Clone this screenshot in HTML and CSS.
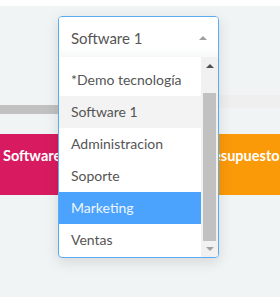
FILE: index.html
```html
<!DOCTYPE html>
<html lang="en">
<head>
  <meta charset="UTF-8" />
  <title>Selector de departamento</title>
  <link rel="stylesheet" href="styles.css">
</head>
<body>
  <div class="topbar"></div>

  <main class="page">
    <!-- progress bar behind the dropdown -->
    <div class="progress">
      <div class="progress-fill"></div>
      <div class="progress-rest"></div>
    </div>

    <!-- summary cards (middle one is covered by the dropdown) -->
    <div class="cards">
      <div class="card card-pink">Software</div>
      <div class="card card-blue"></div>
      <div class="card card-orange">Presupuesto</div>
    </div>
  </main>

  <!-- open select -->
  <div class="select">
    <div class="select-head">
      <span>Software 1</span>
      <span class="caret"></span>
    </div>
    <div class="select-body">
      <ul class="options">
        <li class="option option-cut"></li>
        <li class="option">*Demo tecnología</li>
        <li class="option selected">Software 1</li>
        <li class="option">Administracion</li>
        <li class="option">Soporte</li>
        <li class="option hover">Marketing</li>
        <li class="option">Ventas</li>
      </ul>
      <div class="scrollbar">
        <span class="arrow arrow-up"></span>
        <div class="track"><div class="thumb"></div></div>
        <span class="arrow arrow-down"></span>
      </div>
    </div>
  </div>
</body>
</html>
```

FILE: styles.css
```css
* {
  box-sizing: border-box;
}

body {
  margin: 0;
  background: #f1f4f5;
  font-family: Lato, "Open Sans", sans-serif;
  height: 297px;
  overflow: hidden;
  position: relative;
}

/* white strip at the top */
.topbar {
  height: 6px;
  background: #fff;
}

.page {
  padding-top: 99px;
}

/* progress bar */
.progress {
  display: flex;
  height: 9px;
}

.progress-fill {
  width: 180px;
  background: #c1c1c1;
}

.progress-rest {
  flex: 1;
  background: #efefef;
  margin-top: -10px;
  height: 13px;
}

/* cards row */
.cards {
  display: flex;
  gap: 8px;
  margin-top: 20px;
  height: 61px;
}

.card {
  color: #fff;
  font-weight: bold;
  font-size: 14.5px;
  padding: 13px 3px 0;
  white-space: nowrap;
  overflow: hidden;
}

.card-pink {
  width: 96px;
  background: #d81b60;
}

.card-blue {
  width: 84px;
  background: #2196f3;
}

.card-orange {
  flex: 1;
  background: #fb9a09;
}

/* the open dropdown */
.select {
  position: absolute;
  left: 58px;
  top: 16px;
  width: 161px;
  border: 1px solid #5aabf0;
  border-radius: 4px;
  background: #fff;
  box-shadow: 0 4px 14px rgba(0, 0, 0, 0.12);
  overflow: hidden;
}

.select-head {
  height: 40px;
  display: flex;
  align-items: center;
  justify-content: space-between;
  padding: 2px 11px 0 12px;
  font-size: 15px;
  color: #555;
  background: linear-gradient(#fff 75%, #f7f8f9);
}

.caret {
  width: 0;
  height: 0;
  border-left: 4px solid transparent;
  border-right: 4px solid transparent;
  border-bottom: 4px solid #a0a0a0;
}

.select-body {
  display: flex;
  height: 200px;
}

.options {
  list-style: none;
  margin: 0;
  padding: 0;
  flex: 1;
  overflow: hidden;
}

.option {
  height: 32px;
  line-height: 32px;
  padding-left: 12px;
  font-size: 14px;
  color: #555;
  white-space: nowrap;
}

.option-cut {
  height: 7px;
}

.option.selected {
  background: #f3f3f3;
}

.option.hover {
  background: #4ca3fd;
  color: #eef6ff;
}

/* fake scrollbar */
.scrollbar {
  width: 17px;
  background: #f1f1f1;
  display: flex;
  flex-direction: column;
  align-items: center;
}

.arrow {
  width: 0;
  height: 0;
  border-left: 4px solid transparent;
  border-right: 4px solid transparent;
}

.arrow-up {
  margin: 7px 0 5px;
  border-bottom: 4px solid #505050;
}

.arrow-down {
  margin: 6px 0 6px;
  border-top: 4px solid #a3a3a3;
}

.track {
  flex: 1;
  width: 100%;
  display: flex;
  flex-direction: column;
  justify-content: flex-end;
  align-items: center;
}

.thumb {
  width: 13px;
  height: 148px;
  background: #c1c1c1;
}
```
